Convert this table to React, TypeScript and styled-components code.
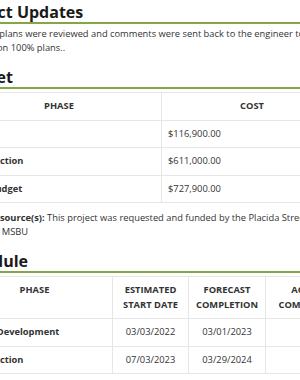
import React from "react";
import styled, { createGlobalStyle } from "styled-components";

const Global = createGlobalStyle`
  html, body { margin: 0; padding: 0; overflow: hidden; background: #fff; }
  body { font-family: "Open Sans", "Noto Sans", sans-serif; color: #333; }
`;

const Page = styled.main`
  margin-left: -44px;
  width: 386px;
  padding-top: 2px;
`;

const Heading = styled.h2<{ $first?: boolean }>`
  margin: ${(p) => (p.$first ? "0" : "12px")} 0 0;
  font-size: 16px;
  line-height: 20px;
  font-weight: 700;
  color: #1a1a1a;
  border-bottom: 2px solid #83a744;
`;

const Text = styled.p<{ $afterTable?: boolean }>`
  margin: ${(p) => (p.$afterTable ? "8px" : "3px")} 0 0;
  padding: 0 12px 0 4px;
  font-size: 9.33px;
  line-height: 14px;
  color: #333;
`;

const Label = styled.strong`
  font-weight: 700;
`;

const Table = styled.table<{ $width: number }>`
  margin-top: 3px;
  width: ${(p) => p.$width}px;
  border-collapse: collapse;
  table-layout: fixed;
  font-size: 9.33px;
  line-height: 14.5px;
  color: #333;
`;

const Th = styled.th`
  border: 1px solid #e6e6e6;
  padding: 6px 6px;
  text-align: center;
  vertical-align: top;
  font-weight: 700;
  text-transform: uppercase;
`;

const Td = styled.td<{ $bold?: boolean; $center?: boolean }>`
  border: 1px solid #e6e6e6;
  padding: 6px 6px;
  font-weight: ${(p) => (p.$bold ? 700 : 400)};
  text-align: ${(p) => (p.$center ? "center" : "left")};
  vertical-align: middle;
`;

const budget = [
  { phase: "Design", cost: "$116,900.00" },
  { phase: "Construction", cost: "$611,000.00" },
  { phase: "Total Budget", cost: "$727,900.00" },
];

const schedule = [
  { phase: "Design Development", start: "03/03/2022", forecast: "03/01/2023", actual: "" },
  { phase: "Construction", start: "07/03/2023", forecast: "03/29/2024", actual: "" },
];

export default function App() {
  return (
    <>
      <Global />
      <Page>
        <Heading $first>Project Updates</Heading>
        <Text>
          The 90% plans were reviewed and comments were sent back to the engineer to address on 100% plans..
        </Text>

        <Heading>Budget</Heading>
        <Table $width={386}>
          <colgroup>
            <col style={{ width: 205 }} />
            <col style={{ width: 181 }} />
          </colgroup>
          <thead>
            <tr>
              <Th>Phase</Th>
              <Th>Cost</Th>
            </tr>
          </thead>
          <tbody>
            {budget.map((r) => (
              <tr key={r.phase}>
                <Td $bold>{r.phase}</Td>
                <Td>{r.cost}</Td>
              </tr>
            ))}
          </tbody>
        </Table>
        <Text $afterTable>
          <Label>Funding source(s):</Label> This project was requested and funded by the Placida Street and Drainage MSBU
        </Text>

        <Heading>Schedule</Heading>
        <Table $width={397}>
          <colgroup>
            <col style={{ width: 156 }} />
            <col style={{ width: 76 }} />
            <col style={{ width: 77 }} />
            <col style={{ width: 88 }} />
          </colgroup>
          <thead>
            <tr>
              <Th>Phase</Th>
              <Th>Estimated Start Date</Th>
              <Th>Forecast Completion</Th>
              <Th>Actual Completion</Th>
            </tr>
          </thead>
          <tbody>
            {schedule.map((r) => (
              <tr key={r.phase}>
                <Td $bold>{r.phase}</Td>
                <Td $center>{r.start}</Td>
                <Td $center>{r.forecast}</Td>
                <Td $center>{r.actual}</Td>
              </tr>
            ))}
          </tbody>
        </Table>
      </Page>
    </>
  );
}
